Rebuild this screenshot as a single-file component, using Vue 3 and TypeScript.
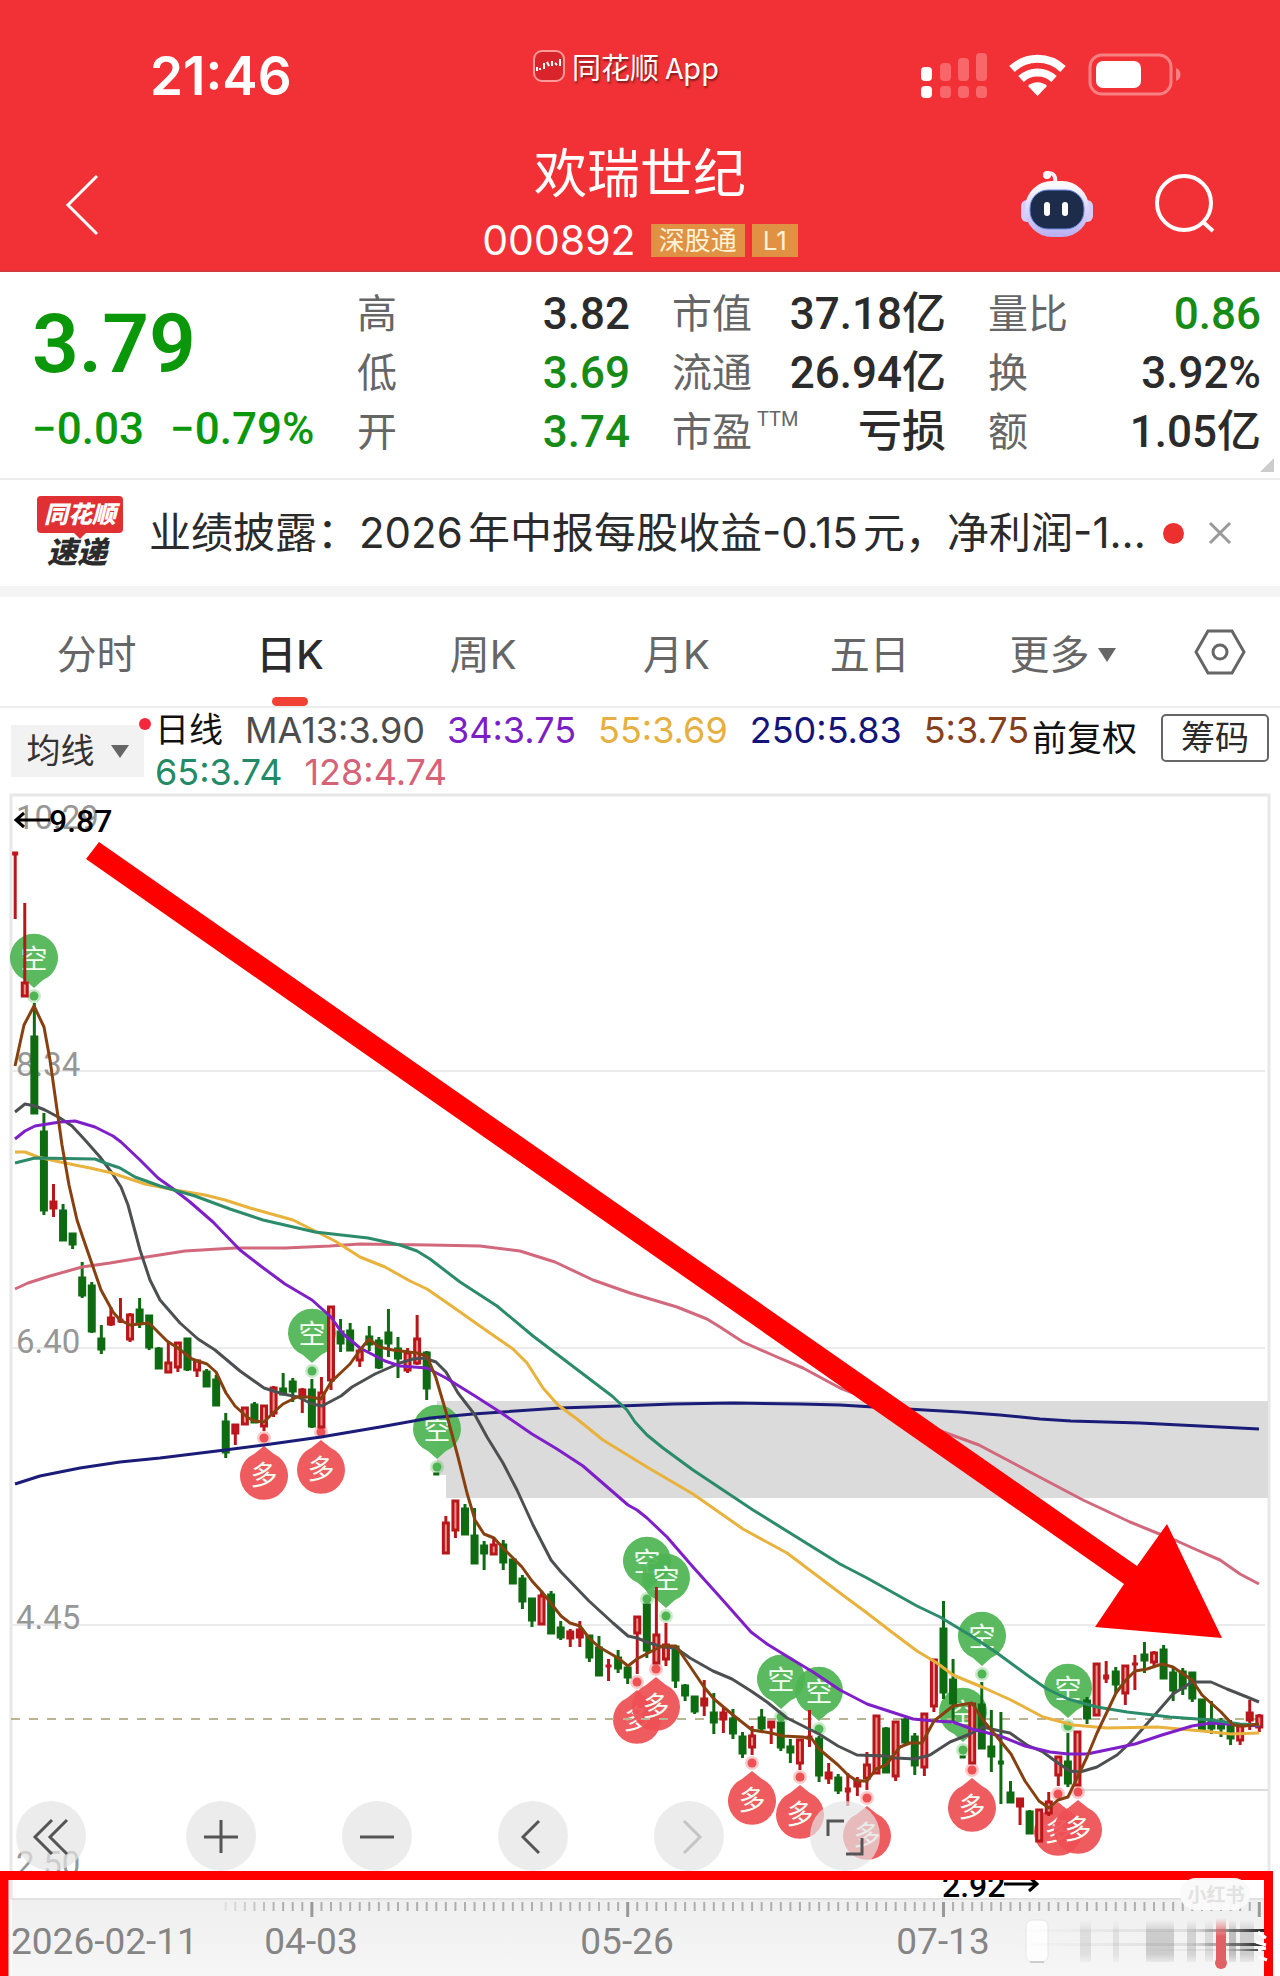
<script setup lang="ts">
type Candle = [color: 'r' | 'g', high: number, top: number, bottom: number, low: number]

const tabs = ['分时', '日K', '周K', '月K', '五日']
const activeTab = '日K'

const averages = [
  [
    { text: 'MA13:3.90', color: '#4d4d4d' },
    { text: '34:3.75', color: '#7b1fc4' },
    { text: '55:3.69', color: '#e6b040' },
    { text: '250:5.83', color: '#14147a' },
    { text: '5:3.75', color: '#86411c' },
  ],
  [
    { text: '65:3.74', color: '#238a66' },
    { text: '128:4.74', color: '#d66277' },
  ],
]

const candles: Candle[] = [
  ['r', 852, 852, 855, 919], ['r', 903, 983, 996, 996], ['g', 1003, 1037, 1113, 1113], ['g', 1113, 1132, 1210, 1215],
  ['r', 1184, 1202, 1208, 1217], ['g', 1204, 1211, 1240, 1241], ['g', 1233, 1234, 1244, 1249], ['g', 1262, 1278, 1295, 1298],
  ['g', 1282, 1286, 1331, 1333], ['g', 1325, 1339, 1349, 1354], ['r', 1307, 1318, 1324, 1326], ['r', 1298, 1319, 1322, 1323],
  ['r', 1313, 1315, 1339, 1342], ['g', 1298, 1310, 1323, 1328], ['g', 1315, 1316, 1347, 1350], ['g', 1347, 1349, 1368, 1368],
  ['r', 1342, 1363, 1372, 1372], ['r', 1342, 1343, 1367, 1372], ['g', 1339, 1339, 1369, 1371], ['r', 1360, 1361, 1370, 1377],
  ['g', 1369, 1372, 1386, 1387], ['g', 1375, 1380, 1405, 1405], ['g', 1413, 1422, 1452, 1458], ['r', 1424, 1425, 1433, 1445],
  ['r', 1407, 1408, 1424, 1425], ['g', 1402, 1405, 1422, 1422], ['r', 1405, 1406, 1426, 1431], ['r', 1386, 1388, 1413, 1417],
  ['g', 1373, 1389, 1394, 1394], ['g', 1378, 1382, 1391, 1402], ['r', 1388, 1390, 1397, 1413], ['g', 1379, 1390, 1426, 1428],
  ['r', 1377, 1393, 1427, 1427], ['r', 1307, 1307, 1380, 1390], ['g', 1319, 1332, 1343, 1352], ['g', 1323, 1331, 1350, 1350],
  ['r', 1347, 1351, 1360, 1367], ['g', 1326, 1337, 1344, 1351], ['g', 1337, 1341, 1367, 1369], ['g', 1309, 1333, 1343, 1357],
  ['g', 1337, 1349, 1358, 1378], ['r', 1348, 1353, 1370, 1373], ['r', 1315, 1339, 1363, 1365], ['g', 1351, 1353, 1388, 1400],
  ['g', 1473, 1473, 1475, 1475], ['r', 1516, 1523, 1553, 1553], ['r', 1500, 1501, 1530, 1538], ['g', 1504, 1509, 1534, 1534],
  ['g', 1508, 1536, 1563, 1563], ['g', 1541, 1546, 1553, 1570], ['r', 1537, 1545, 1554, 1554], ['g', 1540, 1545, 1562, 1570],
  ['g', 1559, 1560, 1583, 1583], ['g', 1575, 1579, 1601, 1609], ['g', 1599, 1599, 1620, 1627], ['r', 1591, 1596, 1624, 1625],
  ['g', 1591, 1595, 1633, 1634], ['g', 1621, 1628, 1637, 1640], ['r', 1629, 1632, 1638, 1647], ['r', 1621, 1630, 1637, 1647],
  ['g', 1635, 1636, 1657, 1662], ['g', 1636, 1648, 1675, 1675], ['r', 1659, 1665, 1667, 1681], ['g', 1650, 1658, 1668, 1673],
  ['g', 1665, 1668, 1677, 1684], ['r', 1616, 1617, 1633, 1674], ['g', 1605, 1605, 1650, 1658], ['r', 1587, 1635, 1663, 1663],
  ['r', 1623, 1645, 1659, 1666], ['g', 1645, 1647, 1680, 1688], ['g', 1684, 1686, 1695, 1701], ['g', 1696, 1697, 1711, 1714],
  ['r', 1680, 1699, 1705, 1716], ['g', 1693, 1713, 1722, 1734], ['r', 1708, 1713, 1719, 1733], ['g', 1709, 1719, 1733, 1739],
  ['g', 1732, 1737, 1753, 1758], ['r', 1726, 1736, 1747, 1755], ['g', 1709, 1718, 1728, 1731], ['r', 1721, 1722, 1727, 1744],
  ['g', 1722, 1723, 1747, 1751], ['g', 1739, 1747, 1752, 1763], ['r', 1740, 1740, 1763, 1770], ['r', 1710, 1736, 1739, 1747],
  ['g', 1736, 1739, 1775, 1782], ['r', 1763, 1773, 1778, 1784], ['g', 1774, 1778, 1790, 1794], ['r', 1773, 1788, 1792, 1806],
  ['r', 1777, 1781, 1786, 1796], ['r', 1752, 1765, 1778, 1790], ['r', 1716, 1716, 1773, 1774], ['g', 1727, 1729, 1772, 1772],
  ['r', 1721, 1722, 1776, 1781], ['g', 1718, 1720, 1742, 1744], ['g', 1733, 1737, 1765, 1775], ['r', 1713, 1714, 1767, 1776],
  ['r', 1659, 1660, 1706, 1712], ['g', 1601, 1629, 1692, 1699], ['g', 1659, 1680, 1703, 1723], ['g', 1756, 1756, 1758, 1758],
  ['r', 1704, 1704, 1763, 1764], ['g', 1682, 1705, 1748, 1749], ['g', 1710, 1747, 1756, 1772], ['g', 1712, 1761, 1764, 1804],
  ['g', 1781, 1793, 1802, 1803], ['r', 1798, 1799, 1806, 1825], ['g', 1810, 1812, 1833, 1834], ['r', 1810, 1810, 1841, 1842],
  ['r', 1792, 1802, 1813, 1816], ['r', 1757, 1757, 1775, 1786], ['g', 1733, 1762, 1783, 1787], ['r', 1731, 1732, 1785, 1785],
  ['g', 1697, 1701, 1718, 1724], ['r', 1663, 1664, 1715, 1715], ['r', 1661, 1675, 1679, 1683], ['g', 1667, 1672, 1684, 1693],
  ['r', 1665, 1666, 1693, 1705], ['r', 1655, 1663, 1665, 1690], ['g', 1642, 1655, 1660, 1673], ['r', 1651, 1653, 1662, 1667],
  ['g', 1645, 1650, 1678, 1679], ['g', 1668, 1673, 1690, 1701], ['g', 1668, 1672, 1688, 1695], ['g', 1673, 1673, 1698, 1702],
  ['g', 1699, 1700, 1730, 1730], ['g', 1701, 1720, 1728, 1734], ['g', 1718, 1722, 1728, 1737], ['g', 1720, 1724, 1738, 1745],
  ['r', 1725, 1726, 1740, 1745], ['r', 1700, 1713, 1720, 1730], ['r', 1714, 1716, 1727, 1732],
]

const candleX = (i: number): number => 15.2 + i * 9.57

const lines = [
  { color: '#1b1b78', points: '15,1484 40,1476 80,1468 120,1462 160,1458 225,1450 264,1445 321,1437 380,1427 430,1418 473,1414 560,1408 620,1406 673,1404 733,1403 800,1404 840,1405 907,1409 960,1412 1000,1415 1040,1419 1071,1421 1140,1423 1200,1426 1259,1429' },
  { color: '#d2687c', points: '15,1289 28,1283 50,1276 82,1267 110,1263 140,1258 185,1251 235,1248 285,1248 330,1246 360,1244 430,1245 480,1246 520,1251 555,1262 593,1280 630,1293 677,1307 707,1319 720,1327 743,1342 777,1357 803,1368 840,1388 882,1404 930,1427 979,1445 1030,1472 1083,1500 1130,1522 1157,1533 1177,1541 1197,1550 1220,1560 1240,1574 1259,1584' },
  { color: '#4c5052', points: '15,1112 25,1104 35,1106 45,1110 60,1118 72,1126 85,1140 100,1157 112,1173 121,1187 128,1205 132,1220 140,1250 150,1280 160,1300 180,1323 198,1339 215,1350 240,1371 264,1388 283,1394 298,1397 312,1404 322,1406 341,1396 352,1387 375,1374 400,1363 413,1359 424,1358 436,1362 446,1372 458,1393 475,1415 487,1437 503,1463 517,1490 533,1525 551,1560 561,1572 589,1601 613,1623 628,1636 637,1638 647,1642 662,1647 676,1648 690,1658 713,1671 732,1679 751,1691 767,1702 787,1718 809,1729 819,1734 838,1746 857,1755 886,1756 896,1758 915,1759 930,1755 950,1742 970,1734 983,1727 1000,1731 1010,1733 1027,1745 1043,1752 1058,1763 1070,1771 1080,1772 1097,1767 1117,1755 1130,1743 1153,1717 1173,1694 1192,1682 1211,1682 1227,1689 1247,1697 1259,1702' },
  { color: '#e8b23c', points: '15,1152 25,1152 38,1157 60,1162 90,1168 112,1173 145,1184 175,1190 205,1195 225,1200 250,1208 275,1215 293,1220 315,1231 335,1241 360,1257 385,1267 410,1281 427,1289 453,1307 487,1331 513,1349 527,1363 543,1388 558,1405 577,1419 603,1440 647,1467 693,1494 743,1529 787,1553 840,1593 867,1613 893,1633 917,1651 937,1663 953,1675 982,1687 1011,1700 1043,1717 1073,1725 1107,1728 1157,1727 1202,1731 1231,1734 1259,1733' },
  { color: '#7f1fc8', points: '15,1139 25,1131 35,1126 60,1122 75,1121 95,1127 113,1136 121,1142 140,1160 158,1178 172,1188 190,1202 213,1222 240,1250 262,1267 285,1284 312,1300 331,1317 342,1333 360,1348 385,1361 400,1366 427,1368 446,1378 475,1396 500,1412 532,1434 557,1449 583,1466 628,1505 637,1510 647,1518 667,1537 693,1567 720,1597 751,1632 767,1644 793,1660 813,1672 840,1690 867,1704 913,1719 934,1721 953,1722 972,1729 1000,1736 1025,1746 1050,1752 1068,1754 1087,1754 1116,1748 1135,1744 1162,1735 1192,1726 1211,1723 1259,1726' },
  { color: '#2b8b6a', points: '15,1163 35,1158 95,1159 105,1163 120,1168 135,1177 160,1186 195,1196 230,1209 263,1220 315,1232 368,1238 400,1245 417,1251 430,1259 460,1282 497,1306 533,1336 583,1374 612,1396 627,1410 635,1422 647,1435 663,1448 693,1470 753,1510 840,1564 867,1578 917,1606 940,1617 973,1637 997,1653 1027,1675 1047,1689 1068,1699 1097,1707 1127,1712 1170,1717 1211,1720 1240,1724 1259,1725' },
  { color: '#87400f', points: '15,1066 24,1025 34,1006 44,1027 50,1060 62,1145 69,1185 77,1220 82,1235 101,1290 113,1312 120,1320 130,1325 140,1324 149,1323 167,1341 178,1348 192,1359 207,1364 216,1372 226,1393 235,1406 247,1417 254,1421 264,1422 274,1412 283,1404 297,1397 310,1397 321,1399 331,1382 350,1364 360,1350 369,1339 379,1347 393,1350 417,1353 427,1356 436,1378 446,1412 458,1457 467,1493 475,1520 484,1534 494,1538 503,1548 522,1567 532,1581 542,1592 561,1616 570,1623 580,1626 589,1638 599,1647 618,1658 628,1666 637,1659 650,1652 662,1646 676,1646 685,1659 704,1687 714,1699 733,1715 752,1730 771,1733 783,1736 803,1737 812,1739 819,1749 838,1765 848,1775 857,1781 867,1781 876,1769 886,1765 900,1747 910,1743 922,1743 934,1721 953,1706 972,1703 982,1719 993,1732 1011,1754 1025,1781 1039,1801 1049,1808 1058,1800 1068,1797 1077,1778 1087,1757 1097,1733 1116,1693 1125,1681 1135,1671 1147,1669 1162,1664 1173,1667 1192,1680 1202,1695 1221,1712 1233,1725 1245,1726 1259,1724' },
]

const sells = [[34, 996], [312, 1371], [437, 1467], [647, 1599], [666, 1616], [781, 1717], [819, 1729], [963, 1750], [982, 1674], [1068, 1726]]
const buys = [[264, 1438], [321, 1432], [637, 1682], [656, 1669], [752, 1763], [800, 1777], [867, 1798], [972, 1770], [1058, 1794], [1078, 1792]]

const priceLabels = [
  { text: '10.29', y: 829 },
  { text: '8.34', y: 1076 },
  { text: '6.40', y: 1353 },
  { text: '4.45', y: 1629 },
  { text: '2.50', y: 1875 },
]

const dates = [
  { text: '04-03', x: 311 },
  { text: '05-26', x: 627 },
  { text: '07-13', x: 943 },
]

const ticks = Array.from({ length: 109 }, (_, k) => {
  const i = k + 22
  return { x: candleX(i), major: (i - 31) % 33 === 0, opacity: Math.min(1, (k + 2) / 8) }
})

const smears = [
  { x: 1080, w: 11, o: 0.12 }, { x: 1113, w: 6, o: 0.1 }, { x: 1146, w: 28, o: 0.22 }, { x: 1187, w: 9, o: 0.18 },
  { x: 1205, w: 8, o: 0.14 }, { x: 1229, w: 7, o: 0.3 }, { x: 1240, w: 14, o: 0.22 },
]
</script>

<template>
  <main class="app">
    <header class="header">
      <div class="status">
        <span class="time">21:46</span>
        <div class="source">
          <svg width="32" height="32" viewBox="0 0 32 32" aria-hidden="true">
            <rect x="1" y="1" width="30" height="30" rx="8" fill="#d9242b" stroke="#ff9a9a" stroke-width="2" />
            <path d="M4 21v-4M7 20v-2M11 13v6M14 12l2 4M19 11v5M22 13l2 2M27 9v7" stroke="#fff" stroke-width="2" fill="none" />
          </svg>
          <span>同花顺 App</span>
        </div>
        <div class="signals">
          <svg width="262" height="48" viewBox="0 0 262 48" aria-hidden="true">
            <g fill="#f8686b">
              <rect x="20" y="11" width="11" height="18" rx="4" />
              <rect x="38" y="6" width="11" height="23" rx="4" />
              <rect x="56" y="1" width="11" height="28" rx="4" />
              <rect x="20" y="34" width="11" height="12" rx="4" />
              <rect x="38" y="34" width="11" height="12" rx="4" />
              <rect x="56" y="34" width="11" height="12" rx="4" />
            </g>
            <rect x="1" y="15" width="11" height="14" rx="4" fill="#fff" />
            <rect x="1" y="34" width="11" height="12" rx="4" fill="#fff" />
            <g fill="none" stroke="#fff" stroke-width="8">
              <path d="M92 17a37 37 0 0 1 51 0" />
              <path d="M101 27a24 24 0 0 1 33 0" />
            </g>
            <path d="M108 34a14 14 0 0 1 19 0l-9.500 10z" fill="#fff" />
            <rect x="170" y="3" width="81" height="39" rx="12" fill="none" stroke="#f98082" stroke-width="3" />
            <rect x="176" y="9" width="45" height="27" rx="7" fill="#fff" />
            <path d="M256 16c6 2 6 11 0 13z" fill="#f98082" />
          </svg>
        </div>
      </div>
      <div class="titlebar">
        <button class="icon-btn back" aria-label="返回">
          <svg width="36" height="62" viewBox="0 0 36 62"><path d="M33 2L4 31l29 29" fill="none" stroke="#fff" stroke-width="3" /></svg>
        </button>
        <div class="title">
          <h1>欢瑞世纪</h1>
          <div class="code"><span>000892</span><b>深股通</b><b class="level">L1</b></div>
        </div>
        <div class="actions">
          <button class="icon-btn" aria-label="智能助手">
            <svg width="74" height="68" viewBox="0 0 74 68">
              <defs>
                <linearGradient id="shell" x1="0" y1="0" x2="0" y2="1"><stop offset="0" stop-color="#fff" /><stop offset="1" stop-color="#b9aef0" /></linearGradient>
              </defs>
              <path d="M26 4c8-3 10 3 9 9" fill="none" stroke="#f4ecff" stroke-width="4" />
              <circle cx="27" cy="5" r="4" fill="#fff" />
              <rect x="1" y="30" width="12" height="22" rx="6" fill="#d4ccfa" />
              <rect x="61" y="30" width="12" height="22" rx="6" fill="#d4ccfa" />
              <rect x="5" y="11" width="64" height="56" rx="27" fill="url(#shell)" />
              <rect x="10" y="20" width="54" height="39" rx="18" fill="#1d2c4b" stroke="#6b8be8" stroke-width="1" />
              <rect x="24" y="32" width="6" height="14" rx="3" fill="#fff" />
              <rect x="42" y="32" width="6" height="14" rx="3" fill="#fff" />
            </svg>
          </button>
          <button class="icon-btn" aria-label="搜索">
            <svg width="62" height="62" viewBox="0 0 62 62"><g fill="none" stroke="#fff" stroke-width="4"><circle cx="30" cy="30" r="27" /><path d="M49 49l10 9" /></g></svg>
          </button>
        </div>
      </div>
    </header>

    <section class="quote">
      <div class="price">
        <strong>3.79</strong>
        <p><span>−0.03</span><span>−0.79%</span></p>
      </div>
      <dl class="stats first">
        <div><dt>高</dt><dd>3.82</dd></div>
        <div><dt>低</dt><dd class="down">3.69</dd></div>
        <div><dt>开</dt><dd class="down">3.74</dd></div>
      </dl>
      <dl class="stats second">
        <div><dt>市值</dt><dd>37.18亿</dd></div>
        <div><dt>流通</dt><dd>26.94亿</dd></div>
        <div><dt>市盈<sup>TTM</sup></dt><dd>亏损</dd></div>
      </dl>
      <dl class="stats third">
        <div><dt>量比</dt><dd class="down">0.86</dd></div>
        <div><dt>换</dt><dd>3.92%</dd></div>
        <div><dt>额</dt><dd>1.05亿</dd></div>
      </dl>
      <i class="corner"></i>
    </section>

    <section class="news">
      <div class="brand">
        <span class="brand-top">同花顺</span>
        <span class="brand-bottom">速递</span>
      </div>
      <a href="#" class="headline">业绩披露：2026年中报每股收益-0.15元，净利润-1...</a>
      <i class="unread"></i>
      <button class="icon-btn" aria-label="关闭">
        <svg width="26" height="26" viewBox="0 0 26 26"><path d="M3 3l20 20M23 3L3 23" stroke="#999" stroke-width="3" /></svg>
      </button>
    </section>

    <nav class="tabs">
      <button v-for="tab in tabs" :key="tab" :class="{ active: tab === activeTab }">{{ tab }}</button>
      <button>更多<i class="caret"></i></button>
      <button class="settings" aria-label="设置">
        <svg width="52" height="46" viewBox="0 0 52 46"><g fill="none" stroke="#666" stroke-width="3"><path d="M14 2h24l12 21-12 21H14L2 23z" /><circle cx="26" cy="23" r="7" /></g></svg>
      </button>
    </nav>

    <section class="indicators">
      <button class="picker">均线<i class="caret"></i><i class="dot"></i></button>
      <div class="averages">
        <div v-for="(row, r) in averages" :key="r" class="avg-row">
          <span v-if="r === 0" class="period">日线</span>
          <span v-for="item in row" :key="item.text" :style="{ color: item.color }">{{ item.text }}</span>
        </div>
      </div>
      <span class="adjust">前复权</span>
      <button class="chips">筹码</button>
    </section>

    <section class="stage">
      <svg class="chart" viewBox="0 792 1280 1184" role="img" aria-label="日K线图">
        <defs>
          <linearGradient id="axis" x1="0" y1="0" x2="0" y2="1">
            <stop offset="0" stop-color="#efefef" /><stop offset="1" stop-color="#f6f6f6" />
          </linearGradient>
          <linearGradient id="streak" x1="0" y1="0" x2="1" y2="0">
            <stop offset="0" stop-color="#555" stop-opacity="0" /><stop offset="0.7" stop-color="#666" stop-opacity="0.15" /><stop offset="1" stop-color="#222" />
          </linearGradient>
          <linearGradient id="fade" x1="0" y1="0" x2="0" y2="1">
            <stop offset="0" stop-color="#444" stop-opacity="0" /><stop offset="0.3" stop-color="#444" /><stop offset="0.8" stop-color="#444" /><stop offset="1" stop-color="#444" stop-opacity="0.3" />
          </linearGradient>
          <linearGradient id="mercury" x1="0" y1="0" x2="0" y2="1">
            <stop offset="0" stop-color="#e06065" stop-opacity="0" /><stop offset="0.4" stop-color="#e06065" />
          </linearGradient>
        </defs>

        <rect x="12" y="1899" width="1257" height="77" fill="url(#axis)" />
        <path d="M11 1899V795h1258v1104" fill="none" stroke="#e8e8e8" stroke-width="3" />
        <path d="M11 1899h1258" stroke="#e2e2e2" stroke-width="2" />
        <path d="M12 1071h1253M12 1348h1253M12 1625h1253" stroke="#ebebeb" stroke-width="2" />
        <path d="M1080 1790h188" stroke="#dcdcdc" stroke-width="2" />
        <path d="M437 1401h831v97H446v-23h-9z" fill="#dbdbdb" />

        <g class="balloon sell">
          <g v-for="([x, y], i) in sells" :key="i">
            <circle :cx="x" :cy="y" r="7" opacity="0.3" />
            <circle :cx="x" :cy="y" r="4.500" />
            <path :d="`M${x} ${y - 8}l-9-8a24 24 0 1 1 18 0z`" opacity="0.93" />
            <text :x="x" :y="y - 27">空</text>
          </g>
        </g>
        <g class="balloon buy">
          <g v-for="([x, y], i) in buys" :key="i">
            <circle :cx="x" :cy="y" r="7" opacity="0.3" />
            <circle :cx="x" :cy="y" r="4.500" />
            <path :d="`M${x} ${y + 8}l-10 8a24 24 0 1 0 20 0z`" opacity="0.93" />
            <text :x="x" :y="y + 47">多</text>
          </g>
        </g>

        <path d="M11 1719h1257" stroke="#b9b592" stroke-width="2" stroke-dasharray="9 9" />

        <g class="price-labels">
          <text v-for="label in priceLabels" :key="label.text" x="16" :y="label.y">{{ label.text }}</text>
        </g>

        <g v-for="(c, i) in candles" :key="i" :class="c[0] === 'r' ? 'up-candle' : 'down-candle'">
          <path :d="`M${candleX(i)} ${c[1]}V${c[4]}`" />
          <rect :x="candleX(i) - 2.5" :y="c[2]" width="5" :height="Math.max(2, c[3] - c[2])" :class="{ hollow: c[0] === 'r' && c[3] - c[2] > 8, thin: c[3] - c[2] <= 4 }" />
        </g>

        <polyline v-for="line in lines" :key="line.color" :points="line.points" :stroke="line.color" fill="none" stroke-width="3" stroke-linejoin="round" />

        <path d="M99 842L1137 1566 1167 1524 1222 1638 1095 1627 1124 1584 86 859z" fill="#fe0000" />

        <g class="extreme">
          <path d="M50 820H16M24 813l-8 7 8 7" />
          <text x="49" y="832">9.87</text>
          <path d="M1004 1884h33M1029 1877l8 7-8 7" />
          <text x="942" y="1897">2.92</text>
        </g>

        <g stroke="#999">
          <path v-for="tick in ticks" :key="tick.x" :d="`M${tick.x} 1902v${tick.major ? 15 : 9}`" :stroke-width="tick.major ? 3 : 2" :opacity="tick.major ? 1 : tick.opacity * 0.75" />
        </g>
        <g class="dates">
          <text x="11" y="1954">2026-02-11</text>
          <text v-for="date in dates" :key="date.text" :x="date.x" y="1954" text-anchor="middle">{{ date.text }}</text>
        </g>

        <rect v-for="s in smears" :key="s.x" :x="s.x" y="1920" :width="s.w" height="42" fill="url(#fade)" :opacity="s.o" />
        <rect x="1026" y="1920" width="22" height="42" rx="6" fill="#fdfdfd" stroke="#e6e6e6" />
        <path d="M1030 1962h14" stroke="#aaa" stroke-width="1" />
        <rect x="1020" y="1929" width="244" height="3" fill="url(#streak)" />
        <rect x="1020" y="1943" width="244" height="3" fill="url(#streak)" />
        <rect x="1140" y="1949" width="124" height="2" fill="url(#streak)" />
        <rect x="1216" y="1918" width="10" height="46" fill="url(#mercury)" />
        <circle cx="1221" cy="1963" r="6" fill="#e06065" />

        <path d="M4 1976V1875.500H1268.500V1976" fill="none" stroke="#fe0000" stroke-width="9" />
        <path d="M1258 1932l8 6M1256 1942l10 3M1258 1950l8-2M1259 1957l8 3" stroke="#fff" stroke-width="3" />
        <rect x="1180" y="1878" width="70" height="32" rx="16" fill="#fafafa" opacity="0.95" />
        <text class="watermark" x="1216" y="1902" text-anchor="middle">小红书</text>
      </svg>

      <div class="toolbar">
        <button aria-label="最左"><svg viewBox="0 0 70 70"><path d="M36 19L19 36l17 17M51 19L34 36l17 17" /></svg></button>
        <button aria-label="放大"><svg viewBox="0 0 70 70"><path d="M35 19v33M18 36h34" /></svg></button>
        <button aria-label="缩小"><svg viewBox="0 0 70 70"><path d="M18 36h34" /></svg></button>
        <button aria-label="左移"><svg viewBox="0 0 70 70"><path d="M41 20L25 36l16 16" /></svg></button>
        <button aria-label="右移" class="muted"><svg viewBox="0 0 70 70"><path d="M30 20l16 16-16 16" /></svg></button>
        <button aria-label="全屏"><svg viewBox="0 0 70 70"><path d="M18 35V20h16M52 37v16H36" /></svg></button>
      </div>
    </section>
  </main>
</template>

<style>
body {
  margin: 0;
  background: #fff;
}
</style>

<style scoped>
.app {
  overflow: hidden;
  background: #fff;
  color: #2b2b2b;
  font-family: Inter, 'Noto Sans CJK SC', sans-serif;
}

button {
  padding: 0;
  border: 0;
  background: none;
  color: inherit;
  font: inherit;
  cursor: pointer;
}

svg {
  display: block;
}

h1, p, dl, dd {
  margin: 0;
}

.header {
  box-sizing: border-box;
  height: 272px;
  border-bottom: 2px solid #d63a3c;
  background: #f23136;
  color: #fff;
}

.status {
  display: grid;
  grid-template-columns: 1fr auto 1fr;
  height: 136px;
  padding: 0 98px 0 70px;
}

.time {
  margin: 44px 0 0 80px;
  font-size: 53px;
  font-weight: 600;
  line-height: 64px;
}

.source {
  display: flex;
  align-items: center;
  gap: 7px;
  height: 40px;
  margin-top: 46px;
  font-family: 'Noto Sans CJK SC', sans-serif;
  font-size: 29px;
  text-shadow: 1px 2px 2px #7a1a1c;
}

.signals {
  justify-self: end;
  margin-top: 52px;
}

.titlebar {
  display: grid;
  grid-template-columns: 1fr auto 1fr;
  padding: 0 64px;
}

.back {
  justify-self: start;
  align-self: start;
  margin-top: 38px;
}

.title {
  display: flex;
  flex-direction: column;
  align-items: center;
}

.title h1 {
  font-size: 53px;
  font-weight: 400;
  line-height: 76px;
}

.code {
  display: flex;
  align-items: center;
  gap: 7px;
  font-size: 41px;
  line-height: 56px;
}

.code span {
  margin-right: 8px;
}

.code b {
  padding: 0 8px;
  background: #e09144;
  color: #fff3d6;
  font-size: 26px;
  font-weight: 400;
  line-height: 33px;
}

.code .level {
  padding: 0 11px;
}

.actions {
  display: flex;
  align-items: center;
  justify-self: end;
  gap: 60px;
  height: 136px;
}

.quote {
  position: relative;
  display: flex;
  box-sizing: border-box;
  height: 208px;
  border-bottom: 2px solid #ececec;
  font-family: Roboto, 'Noto Sans CJK SC', sans-serif;
  font-weight: 500;
}

.price {
  width: 357px;
  padding: 20px 0 0 32px;
  box-sizing: border-box;
  color: #0a970a;
}

.price strong {
  display: block;
  font-size: 82px;
  font-weight: 600;
  line-height: 104px;
}

.price p {
  display: flex;
  gap: 26px;
  font-size: 44px;
  line-height: 66px;
}

.stats {
  padding-top: 13px;
}

.stats div {
  display: flex;
  justify-content: space-between;
  height: 59px;
  line-height: 59px;
}

.stats dt {
  color: #666;
  font-size: 40px;
  font-weight: 400;
}

.stats dd {
  font-size: 44px;
}

.stats sup {
  margin-left: 5px;
  font-size: 20px;
  line-height: 20px;
  vertical-align: 20px;
}

.stats .down {
  color: #168c16;
}

.first {
  width: 273px;
}

.second {
  width: 274px;
  margin-left: 42px;
}

.third {
  flex: 1;
  margin: 0 19px 0 42px;
}

.corner {
  position: absolute;
  right: 6px;
  bottom: 6px;
  border-bottom: 14px solid #ccc;
  border-left: 14px solid transparent;
}

.news {
  display: flex;
  align-items: center;
  height: 106px;
  padding: 0 47px 0 37px;
  border-bottom: 11px solid #f4f4f4;
}

.brand {
  display: flex;
  flex-direction: column;
  align-items: center;
  width: 86px;
  font-style: italic;
  font-weight: 900;
}

.brand-top {
  position: relative;
  width: 86px;
  border-radius: 4px;
  background: #e13034;
  color: #fff;
  font-size: 24px;
  line-height: 37px;
  text-align: center;
}

.brand-top::after {
  position: absolute;
  top: 36px;
  left: 36px;
  border-top: 7px solid #e13034;
  border-right: 7px solid transparent;
  border-left: 7px solid transparent;
  content: '';
}

.brand-bottom {
  padding-right: 6px;
  font-size: 30px;
  line-height: 38px;
}

.headline {
  flex: 1;
  margin-left: 26px;
  color: #2b2b2b;
  font-size: 42px;
  line-height: 60px;
  text-autospace: normal;
  text-decoration: none;
  white-space: nowrap;
}

.unread {
  width: 21px;
  height: 21px;
  margin-right: 23px;
  border-radius: 50%;
  background: #ec302d;
}

.tabs {
  display: flex;
  height: 109px;
  border-bottom: 2px solid #ececec;
  color: #666;
  font-size: 40px;
}

.tabs button {
  position: relative;
  width: 15.1%;
}

.tabs .active {
  color: #2b2b2b;
  font-weight: 500;
}

.tabs .active::after {
  position: absolute;
  bottom: 0;
  left: 50%;
  width: 36px;
  height: 9px;
  margin-left: -18px;
  border-radius: 5px;
  background: #f04134;
  content: '';
}

.tabs .settings {
  display: flex;
  flex: 1;
  align-items: center;
  justify-content: center;
}

.caret {
  display: inline-block;
  margin-left: 9px;
  border-top: 14px solid #666;
  border-right: 9px solid transparent;
  border-left: 9px solid transparent;
  vertical-align: 7px;
}

.indicators {
  display: flex;
  align-items: flex-start;
  height: 84px;
  padding: 0 11px;
  font-size: 34px;
}

.picker {
  position: relative;
  width: 133px;
  height: 52px;
  margin-top: 17px;
  background: #f2f2f2;
  color: #333;
  line-height: 52px;
}

.picker .caret {
  margin-left: 16px;
  border-top-width: 13px;
  vertical-align: 5px;
}

.dot {
  position: absolute;
  top: -7px;
  right: -7px;
  width: 12px;
  height: 12px;
  border-radius: 50%;
  background: #f4283c;
}

.averages {
  flex: 1;
  margin-left: 11px;
  font-size: 36px;
}

.avg-row {
  display: flex;
  gap: 22px;
  height: 42px;
  line-height: 44px;
  white-space: nowrap;
}

.period {
  color: #111;
  font-size: 34px;
}

.adjust {
  margin: 6px 24px 0 0;
  color: #111;
  font-size: 35px;
  line-height: 48px;
}

.chips {
  width: 108px;
  height: 48px;
  margin-top: 6px;
  border: 2px solid #666;
  border-radius: 5px;
  line-height: 44px;
}

.stage {
  position: relative;
}

.chart {
  width: 100%;
  height: auto;
  font-family: Roboto, 'Noto Sans CJK SC', sans-serif;
}

.balloon text {
  fill: #f4fff4;
  font-size: 27px;
  text-anchor: middle;
}

.sell {
  fill: #4fb553;
}

.buy {
  fill: #ee5054;
}

.price-labels {
  fill: #979797;
  font-size: 33px;
}

.up-candle {
  fill: #c4171c;
  stroke: #b8161a;
  stroke-width: 3px;
}

.up-candle .hollow {
  fill: #f0928c;
}

.down-candle {
  fill: #0f6b12;
  stroke: #0f6b12;
  stroke-width: 3px;
}

.thin {
  stroke-width: 1px;
}

.extreme {
  fill: #000;
  font-size: 32px;
  font-weight: 500;
}

.extreme path {
  fill: none;
  stroke: #000;
  stroke-width: 3px;
}

.dates {
  fill: #858585;
  font-size: 37px;
}

.watermark {
  fill: #e2e2e2;
  font-size: 19px;
  font-weight: 700;
}

.toolbar {
  position: absolute;
  bottom: 105px;
  left: 16px;
  display: flex;
  gap: 86px;
}

.toolbar button {
  width: 70px;
  height: 70px;
  border-radius: 50%;
  background: rgba(228, 228, 228, 0.7);
}

.toolbar button:first-child {
  margin-right: 14px;
}

.toolbar path {
  fill: none;
  stroke: #555;
  stroke-width: 3px;
}

.toolbar .muted path {
  stroke: #c4c4c4;
}
</style>
